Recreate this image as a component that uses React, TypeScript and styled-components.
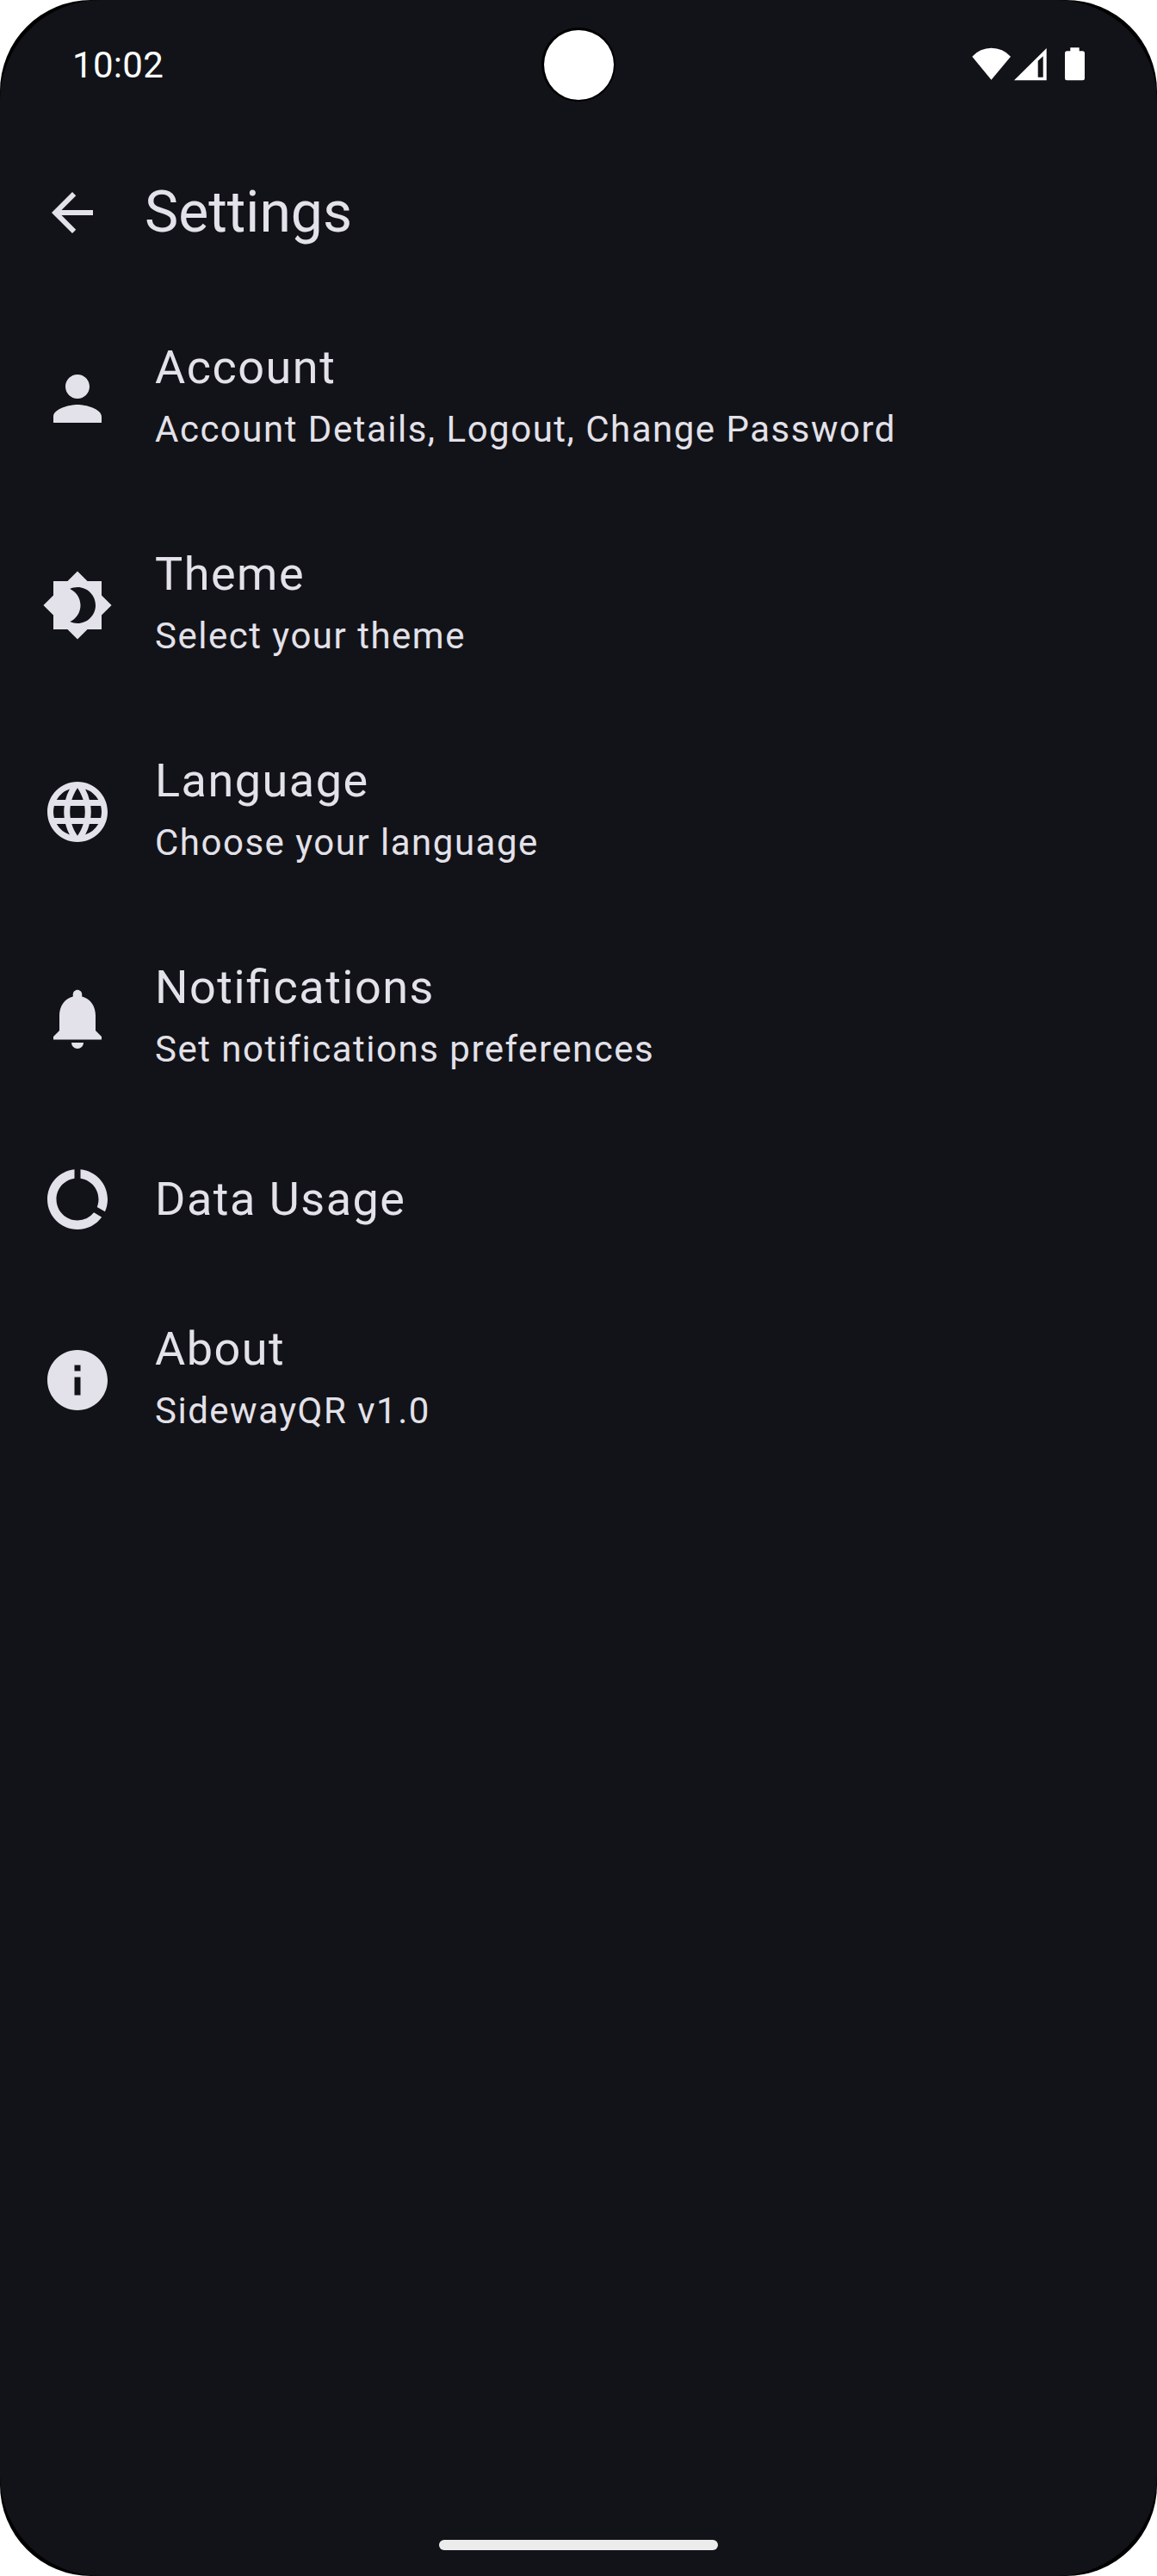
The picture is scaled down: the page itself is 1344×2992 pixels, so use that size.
import React from "react";
import styled, { createGlobalStyle } from "styled-components";
import {
  MdArrowBack,
  MdBrightness4,
  MdDataUsage,
  MdInfo,
  MdLanguage,
  MdNotifications,
  MdPerson,
} from "react-icons/md";
import type { IconType } from "react-icons";

const GlobalStyle = createGlobalStyle`
  *, *::before, *::after { box-sizing: border-box; }
  html, body { margin: 0; background: #ffffff; }
`;

const Screen = styled.div`
  position: relative;
  display: flex;
  flex-direction: column;
  width: 1344px;
  height: 2992px;
  overflow: hidden;
  border-radius: 106px;
  background: #000000;
  font-family: Roboto, "Liberation Sans", sans-serif;
  color: #e3e1e9;
`;

const Surface = styled.div`
  display: flex;
  flex-direction: column;
  flex: 1;
  border-radius: 117px;
  background: #121318;
`;

const StatusBar = styled.header`
  display: flex;
  align-items: center;
  justify-content: space-between;
  height: 151px;
  padding: 0 83px 0 84px;
  color: #ffffff;
`;

const Clock = styled.time`
  font-size: 42px;
  line-height: 51px;
  letter-spacing: 0.3px;
`;

const StatusIcons = styled.svg`
  width: 132px;
  height: 43px;
  fill: currentColor;
`;

const Camera = styled.div`
  position: absolute;
  top: 32px;
  left: 629px;
  width: 86px;
  height: 86px;
  border: 2px solid #000000;
  border-top-width: 3px;
  border-left-width: 3px;
  border-radius: 50%;
  background: #ffffff;
`;

const TopBar = styled.div`
  display: flex;
  align-items: center;
  gap: 48px;
  height: 192px;
  padding: 0 48px;
`;

const BackButton = styled.button`
  display: flex;
  padding: 0;
  border: 0;
  background: none;
  color: inherit;
  font-size: 72px;
`;

const Heading = styled.h1`
  margin: 0;
  font-size: 66px;
  font-weight: 400;
  line-height: 84px;
`;

const List = styled.main`
  display: flex;
  flex-direction: column;
  flex: 1;
`;

const Row = styled.div`
  display: flex;
  align-items: center;
  gap: 48px;
  padding: 48px;
`;

const RowIcon = styled.span`
  display: flex;
  font-size: 84px;
`;

const RowText = styled.div`
  display: flex;
  flex-direction: column;
  line-height: 72px;
  letter-spacing: 1.5px;
`;

const Title = styled.span`
  font-size: 54px;
  font-feature-settings: "liga" 1;
`;

const Subtitle = styled.span`
  font-size: 42px;
`;

const NavBar = styled.footer`
  display: flex;
  justify-content: center;
  height: 72px;
  padding-top: 30px;
`;

const NavHandle = styled.div`
  width: 324px;
  height: 12px;
  border-radius: 6px;
  background: #ececec;
`;

interface Setting {
  icon: IconType;
  title: string;
  subtitle?: string;
}

const settings: Setting[] = [
  { icon: MdPerson, title: "Account", subtitle: "Account Details, Logout, Change Password" },
  { icon: MdBrightness4, title: "Theme", subtitle: "Select your theme" },
  { icon: MdLanguage, title: "Language", subtitle: "Choose your language" },
  { icon: MdNotifications, title: "Notifications", subtitle: "Set notifications preferences" },
  { icon: MdDataUsage, title: "Data Usage" },
  { icon: MdInfo, title: "About", subtitle: "SidewayQR v1.0" },
];

export default function App() {
  return (
    <>
      <GlobalStyle />
      <Screen>
        <Surface>
          <StatusBar>
            <Clock>10:02</Clock>
            <StatusIcons viewBox="0 0 132 43" aria-hidden="true">
              <path d="M0.3 11.700A30 30 0 0 1 45 11.700L22.500 38.700Z" />
              <path fillRule="evenodd" d="M49 39.300L86.700 2V39.300ZM76.700 16.700V35.700H82.700V11.300Z" />
              <path d="M114.300 1.300H124.700V5.300H128.500A2.500 2.500 0 0 1 131 7.800V36.800A2.500 2.500 0 0 1 128.500 39.300H110.500A2.500 2.500 0 0 1 108 36.800V7.800A2.500 2.500 0 0 1 110.500 5.300H114.300Z" />
            </StatusIcons>
          </StatusBar>
          <TopBar>
            <BackButton aria-label="Back">
              <MdArrowBack />
            </BackButton>
            <Heading>Settings</Heading>
          </TopBar>
          <List>
            {settings.map(({ icon: Icon, title, subtitle }) => (
              <Row key={title}>
                <RowIcon>
                  <Icon />
                </RowIcon>
                <RowText>
                  <Title>{title}</Title>
                  {subtitle && <Subtitle>{subtitle}</Subtitle>}
                </RowText>
              </Row>
            ))}
          </List>
          <NavBar>
            <NavHandle />
          </NavBar>
        </Surface>
        <Camera />
      </Screen>
    </>
  );
}
